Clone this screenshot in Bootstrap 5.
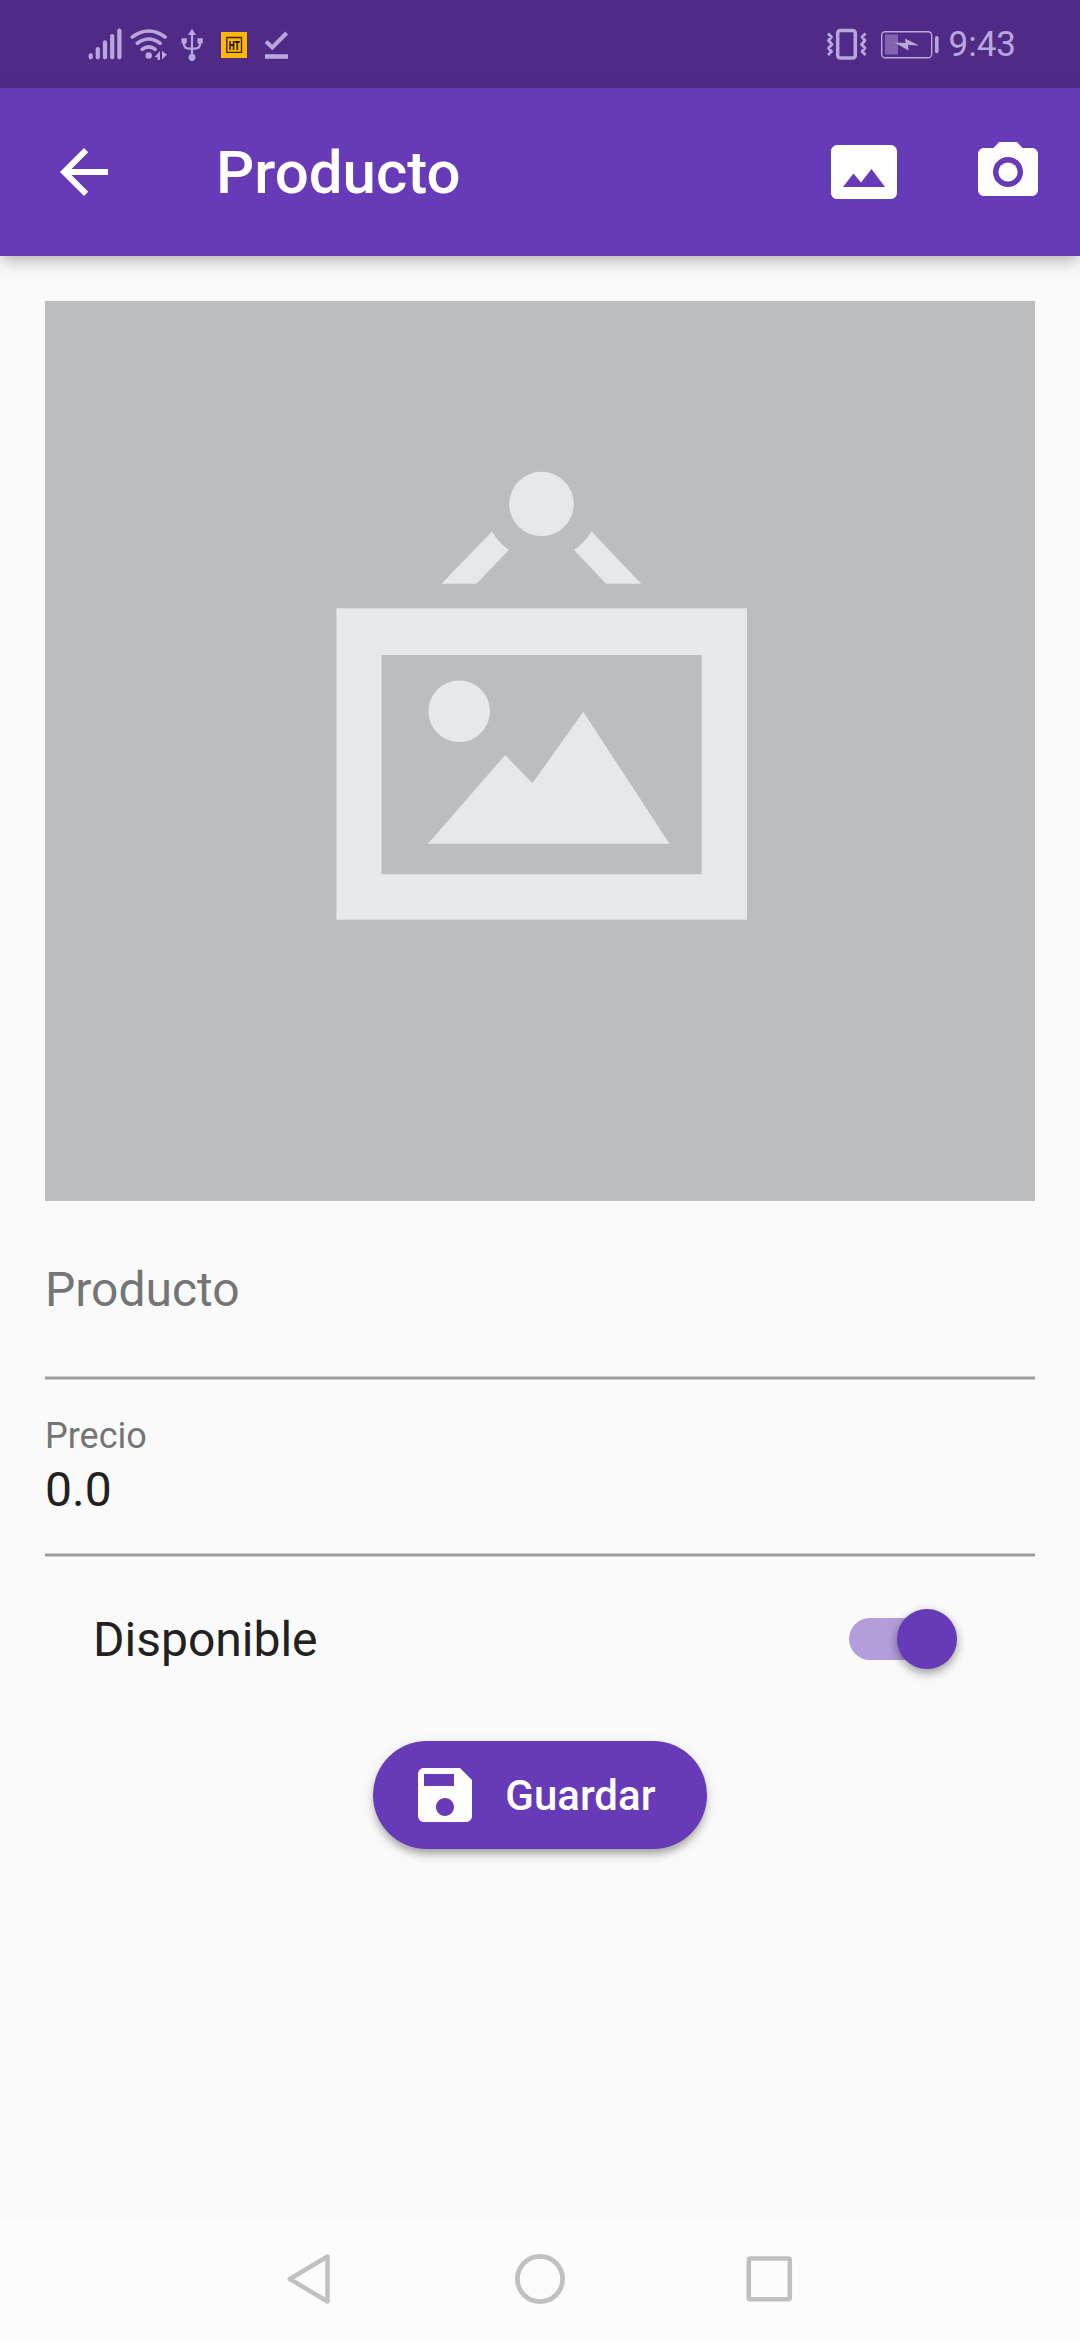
<!DOCTYPE html>
<html lang="es">
<head>
<meta charset="utf-8">
<meta name="viewport" content="width=device-width, initial-scale=1">
<title>Producto</title>
<link href="https://cdn.jsdelivr.net/npm/bootstrap@5.3.0/dist/css/bootstrap.min.css" rel="stylesheet">
<style>
  :root { --brand: #673ab7; --brand-dark: #4f2b87; --soft: #b9a7dc; }
  html, body { height: 100%; }
  body { font-family: Roboto, "Liberation Sans", sans-serif; background: #fafafa; color: #212121; overflow: hidden; }
  svg { display: block; flex: none; }
  .screen { width: 1080px; height: 2340px; }
  .statusbar { height: 88px; background: var(--brand-dark); color: var(--soft); padding: 0 64px 0 86px; }
  .clock { font-size: 35px; line-height: 40px; margin-left: 9px; padding-top: 2px; }
  .appbar { height: 168px; padding: 0 36px 0 48px; background: var(--brand); box-shadow: 0 6px 12px -3px rgba(0,0,0,.2), 0 12px 15px rgba(0,0,0,.06), 0 3px 20px rgba(0,0,0,.06); z-index: 1; }
  .title { font-size: 60px; line-height: 70px; font-weight: 500; margin-left: 96px; padding-top: 2px; color: #fff; }
  .actions { gap: 72px; }
  .icon { width: 72px; height: 72px; fill: #fff; }
  .content { padding: 45px 45px 0; }
  .field { background: linear-gradient(#cfcfcf 1px, #9b9b9b 1px, #9b9b9b 3px, #cfcfcf 3px) bottom / 100% 4px no-repeat; }
  .field-name { height: 179px; padding-top: 61px; }
  .field-price { height: 177px; padding-top: 35px; }
  .lbl { color: #757575; font-size: 48px; line-height: 56px; }
  .lbl-sm { color: #757575; font-size: 36px; line-height: 42px; }
  .val { font-size: 48px; line-height: 56px; margin-top: 5px; }
  .switch-row { height: 164px; padding: 0 78px 0 48px; }
  .switch-row span { font-size: 48px; line-height: 56px; padding-top: 2px; }
  .track { width: 108px; height: 42px; border-radius: 21px; background: linear-gradient(#b39ddb, #b39ddb) left / 99px 100% no-repeat; }
  .thumb { width: 60px; height: 60px; border-radius: 50%; background: var(--brand); box-shadow: 0 3px 9px rgba(0,0,0,.3), 0 6px 12px rgba(0,0,0,.12); }
  .btn-save { width: 333.4px; height: 108px; margin-top: 20px; padding: 0 0 0 36px; border: 0; gap: 24px; font-size: 42px; line-height: 49px; font-weight: 500; color: #fff; background: var(--brand); box-shadow: 0 6px 9px -3px rgba(0,0,0,.25), 0 6px 8px rgba(0,0,0,.12), 0 3px 15px rgba(0,0,0,.08); }
  .btn-save:hover { color: #fff; background: var(--brand); }
  .softnav { height: 122px; background: #fcfcfc; padding: 0 285px; }
</style>
</head>
<body>
<div class="screen d-flex flex-column">
  <div class="statusbar d-flex justify-content-between align-items-center">
    <svg width="206" height="40" viewBox="86 24 206 40" fill="none" stroke="#b9a7dc">
      <!-- mobile signal -->
      <path d="M90.7 55.3v2M97.8 49v8.3M105 42.4v14.9M112.2 36v21.3M119.4 30.7v26.6" stroke-width="4.2" stroke-linecap="round"/>
      <!-- wifi -->
      <path d="M132.3 37q16.4-12 32.8 0M137.3 43.2q11.4-8.4 22.8 0M142.3 49.3q6.4-4.8 12.8 0" stroke-width="3.6" stroke-linecap="round"/>
      <circle cx="148.7" cy="55.5" r="3.2" fill="#b9a7dc" stroke="none"/>
      <path d="M160 51v9h-2.400v-2.800H154.500zM162 51v8.500l5-5z" fill="#b9a7dc" stroke="none"/>
      <!-- usb -->
      <path d="M192 33v24M184 40v4q0 4.500 5 4.700h6q5-.2 5-4.700v-4" stroke-width="2.200"/>
      <path d="M192 28.700l4 6.300h-8zM181.500 38.300h5.300v5.200h-5.300zM197.400 38.300h5.300v5.200h-5.300z" fill="#b9a7dc" stroke="none"/>
      <circle cx="192" cy="57.500" r="3.400" fill="#b9a7dc" stroke="none"/>
      <!-- app badge -->
      <path d="M221 32h26v26h-26z" fill="#ffb60a" stroke="none"/>
      <path d="M226.800 37.500h14.700v14.900h-14.700z" stroke="#33230a" stroke-width="1.300"/>
      <text x="234.200" y="49.600" text-anchor="middle" font-family="Roboto, sans-serif" font-size="13" font-weight="900" textLength="11" lengthAdjust="spacingAndGlyphs" fill="#1c1305" stroke="none">HT</text>
      <!-- download done -->
      <path d="M266 41.500l6.300 6L286.700 33" stroke-width="4"/>
      <path d="M265 56.500h23" stroke-width="4.600"/>
    </svg>
    <div class="d-flex align-items-center">
      <svg width="114" height="40" viewBox="826 24 114 40" fill="none" stroke="#b9a7dc">
        <rect x="837.700" y="30.600" width="17.600" height="27.400" rx="2.500" stroke-width="3.500"/>
        <path d="M828 33.500l3.500 3.500-3 3.500 3.500 4-3.500 3.500 3 3.500-3.500 3.500M865.500 33.500l-3.500 3.500 3 3.500-3.500 4 3.500 3.500-3 3.500 3.500 3.500" stroke-width="2.800" stroke-linejoin="round"/>
        <rect x="881.700" y="31.700" width="50" height="26" rx="3.500" stroke-width="1.400"/>
        <path d="M885 34.500h13v20h-13z" fill="#8064ae" stroke="none"/>
        <path d="M894.500 42.500l11 .500-.500-4.500 14 7-11-.500.500 5.500z" fill="#b9a7dc" stroke="none"/>
        <rect x="935" y="36" width="3.600" height="17.300" rx="1.700" fill="#b9a7dc" stroke="none"/>
      </svg>
      <span class="clock">9:43</span>
    </div>
  </div>

  <nav class="appbar d-flex align-items-center position-relative">
    <svg class="icon" viewBox="0 0 24 24"><path d="M20 11H7.830l5.590-5.590L12 4l-8 8 8 8 1.410-1.410L7.830 13H20v-2z"/></svg>
    <span class="title">Producto</span>
    <div class="actions d-flex ms-auto">
      <svg class="icon" viewBox="0 0 24 24"><path d="M21 3H3C2 3 1 4 1 5v14c0 1.100.900 2 2 2h18c1 0 2-1 2-2V5c0-1-1-2-2-2zM5 17l3.500-4.500 2.500 3.010L14.500 11l4.500 6H5z"/></svg>
      <svg class="icon" viewBox="0 0 24 24"><circle cx="12" cy="12" r="3.200"/><path d="M9 2L7.170 4H4c-1.100 0-2 .900-2 2v12c0 1.100.900 2 2 2h16c1.100 0 2-.900 2-2V6c0-1.100-.900-2-2-2h-3.170L15 2H9zm3 15c-2.760 0-5-2.240-5-5s2.240-5 5-5 5 2.240 5 5-2.240 5-5 5z"/></svg>
    </div>
  </nav>

  <main class="content flex-grow-1 d-flex flex-column">
    <svg width="990" height="900" viewBox="45 301 990 900" fill="#e6e8ea">
      <path fill="#bcbdbf" d="M45 301h990v900H45z"/>
      <circle cx="541.500" cy="504" r="32.300"/>
      <path d="M492 531.500q6 10.500 16.800 18.500L476.500 583.700H441.500zM591.500 531.500l49.700 52.200h-35L574 550q10.500-7 17.500-18.500z"/>
      <path fill-rule="evenodd" d="M336.500 608.300H747v311.400H336.500zM381.600 655v219.300h320.100V655z"/>
      <circle cx="459.200" cy="711.300" r="30.800"/>
      <path d="M428 843.800L505.200 755l27.200 28.300 50.900-71.500 86.200 132z"/>
    </svg>
    <div class="field field-name"><div class="lbl">Producto</div></div>
    <div class="field field-price">
      <div class="lbl-sm">Precio</div>
      <div class="val">0.0</div>
    </div>
    <div class="switch-row d-flex align-items-center justify-content-between">
      <span>Disponible</span>
      <div class="track d-flex align-items-center justify-content-end"><div class="thumb flex-shrink-0"></div></div>
    </div>
    <button type="button" class="btn btn-save rounded-pill d-flex align-items-center align-self-center">
      <svg class="icon" viewBox="0 0 24 24"><path d="M17 3H5c-1.110 0-2 .900-2 2v14c0 1.100.890 2 2 2h14c1.100 0 2-.900 2-2V7l-4-4zm-5 16c-1.660 0-3-1.340-3-3s1.340-3 3-3 3 1.340 3 3-1.340 3-3 3zm3-10H5V5h10v4z"/></svg>
      <span>Guardar</span>
    </button>
  </main>

  <footer class="softnav d-flex align-items-center justify-content-between">
    <svg width="50" height="56" viewBox="285 2251 50 56" fill="none" stroke="#c0c0c0" stroke-width="4.500" stroke-linejoin="round"><path d="M327.500 2256.500v45L289.800 2279z"/></svg>
    <svg width="56" height="56" viewBox="512 2251 56 56" fill="none" stroke="#c0c0c0" stroke-width="4.700"><circle cx="540" cy="2279" r="22.600"/></svg>
    <svg width="50" height="56" viewBox="745 2251 50 56" fill="none" stroke="#c0c0c0" stroke-width="4.500"><rect x="748.800" y="2258.600" width="41" height="40.600" rx="1.500"/></svg>
  </footer>
</div>
<script src="https://cdn.jsdelivr.net/npm/bootstrap@5.3.0/dist/js/bootstrap.bundle.min.js"></script>
</body>
</html>
